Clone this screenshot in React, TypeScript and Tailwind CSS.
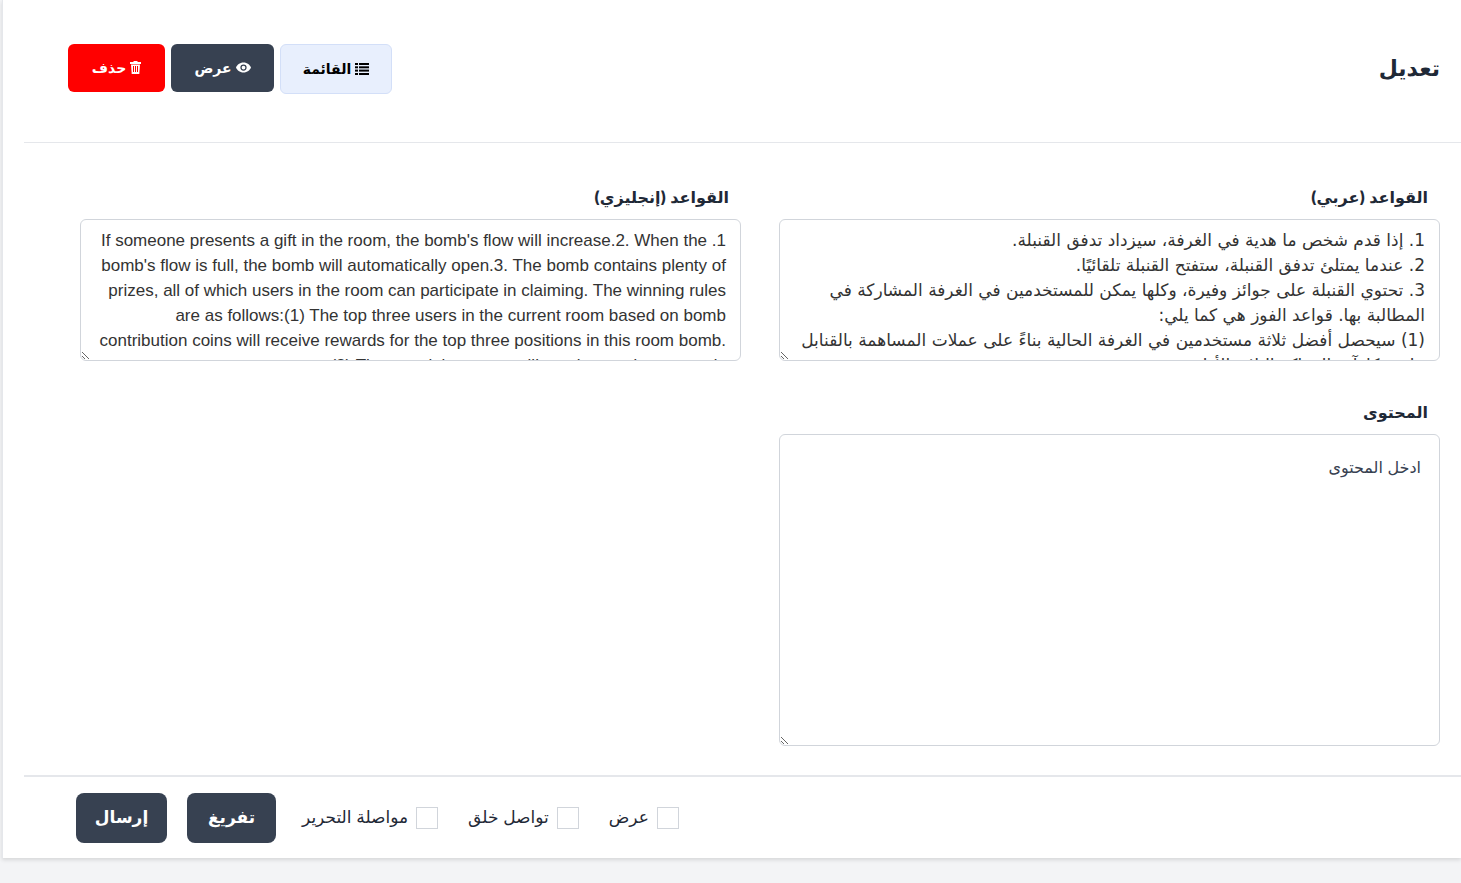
import React from "react";

const ar = "1. إذا قدم شخص ما هدية في الغرفة، سيزداد تدفق القنبلة.\n2. عندما يمتلئ تدفق القنبلة، ستفتح القنبلة تلقائيًا.\n3. تحتوي القنبلة على جوائز وفيرة، وكلها يمكن للمستخدمين في الغرفة المشاركة في المطالبة بها. قواعد الفوز هي كما يلي:\n(1) سيحصل أفضل ثلاثة مستخدمين في الغرفة الحالية بناءً على عملات المساهمة بالقنابل على مكافآت المراكز الثلاثة الأولى.\n(2) سيحصل المستخدمون المتبقون على مكافآت عشوائية.";
const en = "1. If someone presents a gift in the room, the bomb's flow will increase.2. When the bomb's flow is full, the bomb will automatically open.3. The bomb contains plenty of prizes, all of which users in the room can participate in claiming. The winning rules are as follows:(1) The top three users in the current room based on bomb contribution coins will receive rewards for the top three positions in this room bomb.(2) The remaining users will receive random rewards.";

export default function App() {
  const font = { fontFamily: "Inter, 'DejaVu Sans', sans-serif" };
  return (
    <div dir="rtl" className="w-[1461px] h-[883px] bg-[#f3f4f6] overflow-hidden" style={font}>
      <div className="bg-white h-[858px] ml-[2px] shadow-[0_2px_4px_rgba(0,0,0,0.12)] border-l border-[#e5e7eb] flex flex-col">
        <div className="h-[143px] mr-0 ml-[21px] border-b border-[#e5e7eb] flex items-center justify-between pr-[21px] pl-[44px] pb-[5px]">
          <h1 className="text-[22px] font-bold text-[#1f2937]">تعديل</h1>
          <div className="flex gap-[6px] items-start">
            <button className="h-[50px] w-[112px] rounded-md bg-[#e8effd] border border-[#d3dff8] text-[14px] font-bold text-black flex items-center justify-center gap-1">
              <svg width="14" height="12" viewBox="0 0 14 12"><rect x="0" y="0" width="3" height="2"/><rect x="4" y="0" width="10" height="2"/><rect x="0" y="3.3" width="3" height="2"/><rect x="4" y="3.3" width="10" height="2"/><rect x="0" y="6.6" width="3" height="2"/><rect x="4" y="6.6" width="10" height="2"/><rect x="0" y="10" width="3" height="2"/><rect x="4" y="10" width="10" height="2"/></svg>
              القائمة
            </button>
            <button className="h-[48px] w-[103px] rounded-md bg-[#374151] text-white text-[14px] font-bold flex items-center justify-center gap-1">
              <svg width="15" height="11" viewBox="0 0 24 16" fill="white"><path d="M12 0C6 0 1.5 4 0 8c1.5 4 6 8 12 8s10.5-4 12-8C22.5 4 18 0 12 0zm0 13a5 5 0 110-10 5 5 0 010 10zm0-8a3 3 0 100 6 3 3 0 000-6z"/></svg>
              عرض
            </button>
            <button className="h-[48px] w-[97px] rounded-md bg-[#ff0000] text-white text-[14px] font-bold flex items-center justify-center gap-1">
              <svg width="11" height="13" viewBox="0 0 11 13" fill="white"><rect x="0" y="1" width="11" height="2"/><rect x="3.5" y="0" width="4" height="1.5"/><path d="M1 3.5h9l-.7 9.5H1.7z"/><rect x="3" y="5" width="1" height="6" fill="#ff0000"/><rect x="5" y="5" width="1" height="6" fill="#ff0000"/><rect x="7" y="5" width="1" height="6" fill="#ff0000"/></svg>
              حذف
            </button>
          </div>
        </div>
        <div className="flex-1 pt-[42px] pr-[21px] pl-[56px] ml-[21px]">
          <div className="grid grid-cols-2 gap-x-[38px]">
            <div>
              <label className="block text-[16px] font-bold text-[#1f2937] px-[12px] mb-[10px]">القواعد (عربي)</label>
              <textarea readOnly defaultValue={ar} className="w-full h-[142px] border border-[#d1d5db] rounded-md px-[14px] py-[8px] text-[17px] leading-[25px] text-[#333] resize-y" style={{ fontFamily: "'DejaVu Sans', sans-serif" }} />
            </div>
            <div>
              <label className="block text-[16px] font-bold text-[#1f2937] px-[12px] mb-[10px]">القواعد (إنجليزي)</label>
              <textarea readOnly defaultValue={en} className="w-full h-[142px] border border-[#d1d5db] rounded-md px-[14px] py-[8px] text-[17px] leading-[25px] text-[#333] resize-y" style={{ fontFamily: "'Liberation Sans', Arial, sans-serif" }} />
            </div>
            <div className="mt-[33px]">
              <label className="block text-[16px] font-bold text-[#1f2937] px-[12px] mb-[10px]">المحتوى</label>
              <textarea placeholder="ادخل المحتوى" className="w-full h-[312px] border border-[#d1d5db] rounded-md px-[18px] py-[20px] text-[16px] text-[#333] placeholder:text-[#374151] resize-y" />
            </div>
          </div>
        </div>
        <div className="ml-0 mr-0 border-t-[2px] border-[#e5e7eb] h-[83px] flex items-center justify-end pl-[52px] ml-[21px]">
          <div className="flex items-center" dir="rtl">
            <label className="flex items-center gap-[8px] text-[17px] text-[#1f2937] ml-[30px]">
              <span className="w-[22px] h-[22px] border border-[#d1d5db] bg-white"></span>عرض
            </label>
            <label className="flex items-center gap-[8px] text-[17px] text-[#1f2937] ml-[30px]">
              <span className="w-[22px] h-[22px] border border-[#d1d5db] bg-white"></span>تواصل خلق
            </label>
            <label className="flex items-center gap-[8px] text-[17px] text-[#1f2937] ml-[26px]">
              <span className="w-[22px] h-[22px] border border-[#d1d5db] bg-white"></span>مواصلة التحرير
            </label>
            <button className="h-[50px] w-[89px] rounded-lg bg-[#374151] text-white text-[17px] font-bold ml-[20px]">تفريغ</button>
            <button className="h-[50px] w-[91px] rounded-lg bg-[#374151] text-white text-[17px] font-bold">إرسال</button>
          </div>
        </div>
      </div>
    </div>
  );
}
